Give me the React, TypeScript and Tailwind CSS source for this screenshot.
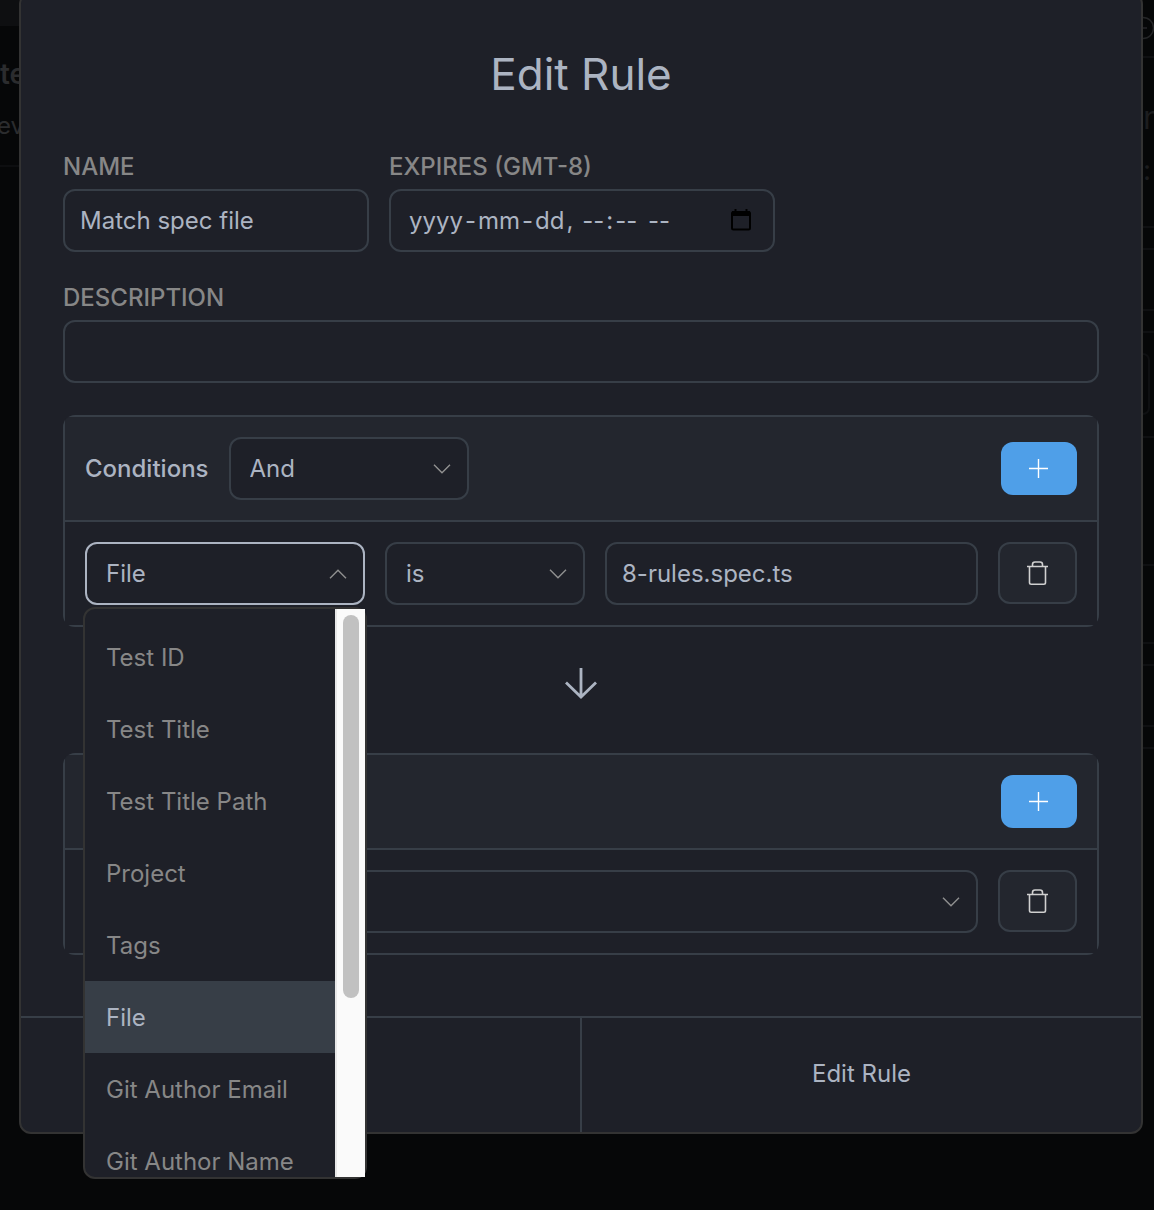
import type { ReactNode } from "react";

const fields = [
  "Test ID",
  "Test Title",
  "Test Title Path",
  "Project",
  "Tags",
  "File",
  "Git Author Email",
  "Git Author Name",
];

const controlClass =
  "h-[63px] w-full rounded-xl border-2 border-[#373e47] bg-[#1e2028] text-2xl text-[#acb4c2] outline-none";

const labelClass = "mb-1.5 block font-medium leading-8 text-[#878787]";

const segmentClass =
  "[field-sizing:content] border-0 bg-transparent px-0.5 text-2xl outline-none placeholder:text-[#acb4c2]";

function Chevron({ up = false }: { up?: boolean }) {
  return (
    <svg
      aria-hidden="true"
      viewBox="0 0 18 10"
      className={`pointer-events-none absolute top-1/2 h-[10px] w-[18px] -translate-y-1/2 ${up ? "right-4" : "right-[18px]"}`}
      fill="none"
      stroke="#909090"
      strokeWidth="1.4"
    >
      <path d={up ? "M1 9.2 9 1.2 17 9.2" : "M1 .8 9 8.8 17 .8"} />
    </svg>
  );
}

function Select({ label, options, className }: { label: string; options: string[]; className: string }) {
  return (
    <div className={`relative ${className}`}>
      <select aria-label={label} className={`${controlClass} appearance-none pl-[19px] pr-12`}>
        {options.map((o) => (
          <option key={o}>{o}</option>
        ))}
      </select>
      <Chevron />
    </div>
  );
}

function AddButton({ label }: { label: string }) {
  return (
    <button
      type="button"
      aria-label={label}
      className="ml-auto flex h-[53px] w-[76px] items-center justify-center rounded-xl bg-[#4f9fe8]"
    >
      <svg aria-hidden="true" viewBox="0 0 20 20" className="size-5" stroke="#fff" strokeWidth="1.4">
        <path d="M9.500 0v19M0 9.500h19" />
      </svg>
    </button>
  );
}

function DeleteButton({ label }: { label: string }) {
  return (
    <button
      type="button"
      aria-label={label}
      className="flex h-[62px] w-[79px] shrink-0 items-center justify-center rounded-xl border-2 border-[#373e47] bg-[#23262e]"
    >
      <svg aria-hidden="true" viewBox="0 0 22 24" className="h-6 w-[22px]" fill="none" stroke="#d0d0d0" strokeWidth="1.6">
        <path d="M0 5.500h21M5.500 5.500V3.500Q5.500 1 8 1h5Q15.500 1 15.500 3.500V5.500M2.500 5.500v16Q2.500 23.200 4.200 23.200h12.600Q18.500 23.200 18.500 21.500V5.500" />
      </svg>
    </button>
  );
}

function ExpiryField() {
  return (
    <div role="group" aria-label="Expires" className={`${controlClass} relative flex items-center pl-4`}>
      <input id="expires" placeholder="yyyy" className={segmentClass} />
      <span>-</span>
      <input aria-label="Month" placeholder="mm" className={segmentClass} />
      <span>-</span>
      <input aria-label="Day" placeholder="dd" className={segmentClass} />
      <span className="whitespace-pre">, </span>
      <input aria-label="Hour" placeholder="--" className={segmentClass} />
      <span>:</span>
      <input aria-label="Minute" placeholder="--" className={segmentClass} />
      <span className="whitespace-pre"> </span>
      <input aria-label="AM or PM" placeholder="--" className={segmentClass} />
      <button type="button" aria-label="Open calendar" className="absolute right-[22px] top-[18px]">
        <svg aria-hidden="true" viewBox="0 0 20 22" className="h-[22px] w-5" fill="none" stroke="#000">
          <rect x="1" y="3" width="18" height="17.500" rx="1.500" strokeWidth="2" />
          <path d="M1 4.500h18" strokeWidth="5" />
          <path d="M4.500 0v3M15.500 0v3" strokeWidth="2" />
        </svg>
      </button>
    </div>
  );
}

function Panel({ header, children }: { header: ReactNode; children: ReactNode }) {
  return (
    <div className="overflow-hidden rounded-xl">
      <div className="border-2 border-[#373e47]">
        <div className="flex items-center gap-5 border-b-2 border-[#373e47] bg-[#23262e] p-5">{header}</div>
        <div className="flex gap-5 p-5">{children}</div>
      </div>
    </div>
  );
}

function FieldList() {
  return (
    <div className="absolute left-5 top-48 z-10 flex h-[572px] w-[284px] rounded-xl border-2 border-[#333333] bg-[#1e2028]">
      <ul role="listbox" aria-label="Field" className="flex-1 overflow-hidden pt-3">
        {fields.map((f) => (
          <li
            key={f}
            role="option"
            aria-selected={f === "File"}
            className={`flex h-[72px] items-center pl-[21px] pt-0.5 text-2xl ${
              f === "File" ? "bg-[#373e47] text-[#acb4c2]" : "text-[#878787]"
            }`}
          >
            {f}
          </li>
        ))}
      </ul>
      <div aria-hidden="true" className="flex w-[30px] justify-center border-l-2 border-[#e8e8e8] bg-[#fafafa] pt-1.5">
        <div className="h-[383px] w-4 rounded-full bg-[#c1c1c1]" />
      </div>
    </div>
  );
}

function LeftEdge() {
  return (
    <div aria-hidden="true" className="w-[19px] shrink-0 overflow-hidden text-[#2b2c2e]">
      <div className="h-[26px] bg-[#0e0f11]" />
      <div className="h-[141px] border-b-2 border-[#0d0e10] pt-8">
        <div className="text-[28px] font-semibold leading-8">te</div>
        <div className="-ml-[3px] mt-5 text-2xl leading-8">ev</div>
      </div>
    </div>
  );
}

function RightEdge() {
  return (
    <div aria-hidden="true" className="w-[11px] shrink-0 overflow-hidden bg-[#060708] text-[#1c1d1f]">
      <div className="h-[58px] border-b-2 border-[#0f1012] pt-4">
        <svg viewBox="0 0 24 24" className="-ml-[12px] size-6" fill="none" stroke="#242527" strokeWidth="1.5">
          <circle cx="12" cy="12" r="10.500" />
          <path d="M6 12h10" />
        </svg>
      </div>
      <div className="h-[170px] border-b-2 border-[#0f1012] pt-10">
        <div className="text-[32px] leading-10">n</div>
        <div className="mt-3 text-[28px] leading-10">:</div>
      </div>
      <div className="h-[22px] border-b-2 border-[#0f1012]" />
      <div className="h-[61px] border-b-2 border-[#0f1012]" />
      <div className="h-[22px] border-b-2 border-[#0f1012]" />
      <div className="h-[105px] border-b-2 border-[#0f1012] pt-5">
        <div className="mr-1 h-[62px] rounded-r-xl border-2 border-l-0 border-[#0f1012]" />
      </div>
      <div className="h-[128px] border-b-2 border-[#0f1012]" />
      <div className="h-[78px] border-b-2 border-[#0f1012]" />
      <div className="h-[22px] border-b-2 border-[#0f1012]" />
      <div className="h-[61px] border-b-2 border-[#0f1012]" />
      <div className="h-[22px] border-b-2 border-[#0f1012]" />
    </div>
  );
}

export default function App() {
  return (
    <div className="flex min-h-screen items-start overflow-hidden bg-[#060708] font-['Inter',sans-serif] text-2xl text-[#acb4c2]">
      <LeftEdge />
      <form className="-mt-2 min-w-0 flex-1 rounded-xl border-2 border-[#333333] bg-[#1e2028]">
        <div className="px-[42px] pt-[50px]">
          <h1 className="text-center text-[44px] leading-[60px]">Edit Rule</h1>
          <div className="mt-[47px] flex gap-5">
            <div className="w-[306px]">
              <label htmlFor="name" className={labelClass}>
                NAME
              </label>
              <input id="name" defaultValue="Match spec file" className={`${controlClass} px-[15px]`} />
            </div>
            <div className="w-[386px]">
              <label htmlFor="expires" className={labelClass}>
                EXPIRES (GMT-8)
              </label>
              <ExpiryField />
            </div>
          </div>
          <div className="mt-[30px]">
            <label htmlFor="description" className={labelClass}>
              DESCRIPTION
            </label>
            <input id="description" className={`${controlClass} px-[15px]`} />
          </div>

          <section className="relative mt-8" aria-label="Conditions">
            <Panel
              header={
                <>
                  <h2 className="font-medium">Conditions</h2>
                  <Select label="Operator" options={["And", "Or"]} className="w-60" />
                  <AddButton label="Add condition" />
                </>
              }
            >
              <button
                type="button"
                aria-haspopup="listbox"
                aria-expanded="true"
                className="relative h-[63px] w-[280px] shrink-0 rounded-xl border-2 border-[#acb4c2] pl-[19px] text-left"
              >
                File
                <Chevron up />
              </button>
              <Select label="Comparison" options={["is", "is not"]} className="w-[200px] shrink-0" />
              <input aria-label="Value" defaultValue="8-rules.spec.ts" className={`${controlClass} min-w-0 flex-1 px-[15px]`} />
              <DeleteButton label="Delete condition" />
            </Panel>
            <FieldList />
          </section>

          <svg
            aria-hidden="true"
            viewBox="0 0 32 32"
            className="mx-auto mb-[53px] mt-[41px] size-8"
            fill="none"
            stroke="#acb4c2"
            strokeWidth="2.800"
          >
            <path d="M16 0v29M1 14.500 16 29 31 14.500" />
          </svg>

          <section aria-label="Actions">
            <Panel header={<AddButton label="Add action" />}>
              <Select label="Action" options={[""]} className="min-w-0 flex-1" />
              <DeleteButton label="Delete action" />
            </Panel>
          </section>
        </div>
        <footer className="mt-[61px] box-content flex h-[114px] border-t-2 border-[#373e47]">
          <button type="button" aria-label="Cancel" className="flex-1 border-r-2 border-[#373e47]" />
          <button type="submit" className="flex-1 pb-0.5">
            Edit Rule
          </button>
        </footer>
      </form>
      <RightEdge />
    </div>
  );
}
